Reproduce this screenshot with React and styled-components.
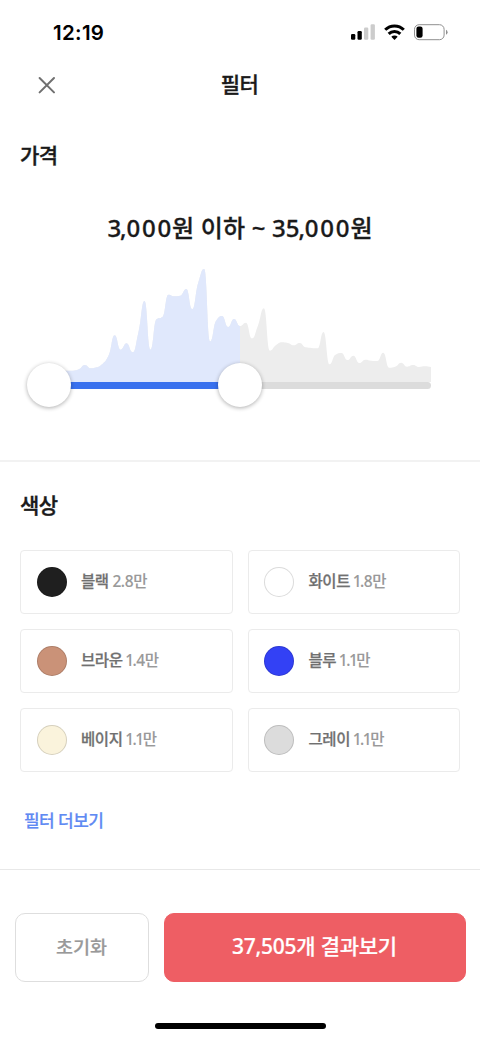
import React from "react";
import styled, { createGlobalStyle } from "styled-components";

const GlobalStyle = createGlobalStyle`
  * {
    box-sizing: border-box;
  }

  body {
    margin: 0;
    background: #ffffff;
    font-family: "Noto Sans", "Noto Sans CJK KR", sans-serif;
    color: #1a1a1a;
  }

  button {
    font-family: inherit;
    cursor: pointer;
  }
`;

const Container = styled.div`
  width: 480px;
  height: 1039px;
  display: flex;
  flex-direction: column;
  overflow: hidden;
`;

const StatusBar = styled.div`
  height: 62px;
  padding: 2px 32px 0 53px;
  display: flex;
  align-items: center;
  justify-content: space-between;
`;

const Time = styled.span`
  font-family: "Inter", sans-serif;
  font-size: 20.5px;
  font-weight: 600;
  letter-spacing: 0.3px;
  color: #000000;
`;

const StatusIcons = styled.svg`
  width: 98px;
  height: 18px;
`;

const Header = styled.header`
  height: 46px;
  padding: 0 38px;
  display: grid;
  grid-template-columns: 18px 1fr 18px;
  align-items: center;
`;

const CloseButton = styled.button`
  display: flex;
  padding: 0;
  border: none;
  background: none;
`;

const Title = styled.h1`
  margin: 0;
  padding: 0 1px 3px 0;
  font-size: 21px;
  line-height: 30px;
  font-weight: 500;
  letter-spacing: -0.5px;
  text-align: center;
  -webkit-text-stroke: 0.35px currentColor;
`;

const Section = styled.section`
  padding: ${({ $top }) => $top}px 20px 0;
  height: ${({ $height }) => $height}px;
  border-bottom: ${({ $line }) => $line};
`;

const SectionTitle = styled.h2`
  margin: 0;
  font-size: 21px;
  line-height: 30px;
  font-weight: 500;
  letter-spacing: -0.5px;
  -webkit-text-stroke: 0.4px currentColor;
`;

const PriceRange = styled.p`
  margin: 41px 0 0;
  font-size: 24px;
  line-height: 34px;
  font-weight: 500;
  text-align: center;
  white-space: nowrap;
  word-spacing: 0.4px;
  -webkit-text-stroke: 0.3px currentColor;
`;

const Glyph = styled.span`
  margin: 0 ${({ $space }) => $space}px;
`;

const Slider = styled.div`
  position: relative;
  width: 382px;
  margin: 17px 0 0 29px;
`;

const Histogram = styled.svg`
  display: block;
  width: 382px;
  height: 120px;
`;

const Track = styled.div`
  height: 7px;
  border-radius: 4px;
  background: #dcdcdc;
`;

const TrackFill = styled.div`
  height: 7px;
  border-radius: 4px;
  background: #3971ee;
`;

const Knob = styled.div`
  position: absolute;
  bottom: -18px;
  width: 44px;
  height: 44px;
  margin-left: -22px;
  border-radius: 50%;
  background: #ffffff;
  box-shadow: 0 1px 4px rgba(0, 0, 0, 0.32);
`;

const ColorGrid = styled.div`
  margin-top: 30px;
  display: grid;
  grid-template-columns: 1fr 1fr;
  gap: 15px;
`;

const ColorCard = styled.button`
  height: 64px;
  padding: 0 15.5px;
  display: flex;
  align-items: center;
  gap: 14.5px;
  border: 1px solid #ebebeb;
  border-radius: 4px;
  background: #ffffff;
`;

const Swatch = styled.span`
  width: 30px;
  height: 30px;
  border-radius: 50%;
  border: 1px solid rgba(0, 0, 0, 0.14);
  background: ${({ $color }) => $color};
`;

const ColorLabel = styled.span`
  font-size: 15.5px;
  line-height: 22px;
  font-weight: 500;
  letter-spacing: -0.4px;
  color: #707070;
  padding-bottom: 2px;
  -webkit-text-stroke: 0.25px currentColor;
`;

const Count = styled.span`
  font-weight: 500;
  color: #999999;
  -webkit-text-stroke: 0.1px currentColor;
`;

const MoreLink = styled.button`
  margin: 37px 0 0 4px;
  padding: 0;
  border: none;
  background: none;
  font-size: 17px;
  line-height: 24px;
  font-weight: 500;
  letter-spacing: -0.55px;
  color: #5f8af3;
  -webkit-text-stroke: 0.2px currentColor;
`;

const Footer = styled.footer`
  flex: 1;
  padding: 43px 14.5px 10px;
  display: flex;
  flex-direction: column;
  justify-content: space-between;
  align-items: center;
`;

const Actions = styled.div`
  width: 100%;
  display: grid;
  grid-template-columns: 134px 1fr;
  gap: 15px;
`;

const ActionButton = styled.button`
  height: 69px;
  padding: 0 0 ${({ $primary }) => ($primary ? 5 : 3)}px;
  border: 1px solid ${({ $primary }) => ($primary ? "#ee5e64" : "#dedede")};
  border-radius: 10px;
  background: ${({ $primary }) => ($primary ? "#ee5e64" : "#ffffff")};
  color: ${({ $primary }) => ($primary ? "#ffffff" : "#999999")};
  font-size: ${({ $primary }) => ($primary ? 21 : 18.5)}px;
  font-weight: 500;
  letter-spacing: ${({ $primary }) => ($primary ? -0.25 : 0)}px;
  -webkit-text-stroke: 0.2px currentColor;
`;

const HomeIndicator = styled.div`
  width: 171px;
  height: 6px;
  border-radius: 3px;
  background: #000000;
`;

const colors = [
  { name: "블랙", count: "2.8만", value: "#1f1f1f" },
  { name: "화이트", count: "1.8만", value: "#ffffff" },
  { name: "브라운", count: "1.4만", value: "#ca9278" },
  { name: "블루", count: "1.1만", value: "#3341f5" },
  { name: "베이지", count: "1.1만", value: "#faf3dc" },
  { name: "그레이", count: "1.1만", value: "#dcdcdc" },
];

const prices = [
  34, 34, 34, 34, 34, 38, 51, 41, 44, 55, 80, 140, 97, 116, 89, 151, 243, 97,
  188, 195, 262, 257, 259, 279, 219, 298, 339, 122, 184, 198, 165, 189, 168,
  178, 131, 169, 221, 94, 110, 119, 117, 110, 117, 104, 102, 101, 150, 53, 82,
  87, 66, 79, 57, 67, 64, 63, 88, 43, 46, 58, 46, 51, 45, 47, 45,
];

const WIDTH = 382;
const HEIGHT = 120;

// Smooth area through every bucket, flat at each peak and valley
const getAreaPath = (values) => {
  const step = WIDTH / (values.length - 1);
  const ys = values.map((value) => HEIGHT - value / 3);
  const slopes = ys.map((y, i) => {
    if (i === 0 || i === ys.length - 1) return 0;
    const before = y - ys[i - 1];
    const after = ys[i + 1] - y;
    return before * after <= 0 ? 0 : (2 * before * after) / (before + after);
  });

  let path = `M0 ${HEIGHT} L0 ${ys[0]}`;
  for (let i = 1; i < ys.length; i++) {
    const x = i * step;
    path += ` C${x - step / 2} ${ys[i - 1] + slopes[i - 1] / 2}`;
    path += ` ${x - step / 2} ${ys[i] - slopes[i] / 2} ${x} ${ys[i]}`;
  }
  return `${path} L${WIDTH} ${HEIGHT} Z`;
};

// Adjusts the room around single characters, e.g. the wide tabular "1"
const SpacedText = ({ text, spacing }) =>
  text.split("").map((char, i) =>
    char in spacing ? (
      <Glyph key={i} $space={spacing[char]}>
        {char}
      </Glyph>
    ) : (
      char
    )
  );

const PriceSlider = ({ from, to }) => {
  const area = getAreaPath(prices);

  return (
    <Slider>
      <Histogram viewBox={`0 0 ${WIDTH} ${HEIGHT}`}>
        <clipPath id="selected">
          <rect x={from * WIDTH} width={(to - from) * WIDTH} height={HEIGHT} />
        </clipPath>
        <path d={area} fill="#ededed" />
        <path d={area} fill="#e0e8fc" clipPath="url(#selected)" />
      </Histogram>
      <Track>
        <TrackFill
          style={{
            marginLeft: `${from * 100}%`,
            width: `${(to - from) * 100}%`,
          }}
        />
      </Track>
      <Knob style={{ left: `${from * 100}%` }} />
      <Knob style={{ left: `${to * 100}%` }} />
    </Slider>
  );
};

const App = () => {
  return (
    <Container>
      <GlobalStyle />
      <StatusBar>
        <Time>12:19</Time>
        <StatusIcons viewBox="0 0 98 18">
          <rect x="1" y="11" width="4.3" height="5.8" rx="1.2" />
          <rect x="7.5" y="8" width="4.3" height="8.8" rx="1.2" />
          <rect x="14" y="4.6" width="4.3" height="12.2" rx="1.2" fill="#ccc" />
          <rect x="20.6" y="1.2" width="4.3" height="15.6" rx="1.2" fill="#ccc" />
          <g fill="none" stroke="#000" strokeWidth="3">
            <path d="M35.2 6.8a13.2 13.2 0 0 1 18.6 0" />
            <path d="M38.7 10.9a8.2 8.2 0 0 1 11.6 0" />
          </g>
          <path d="M44.5 17l-3.2-3.3a4.6 4.6 0 0 1 6.4 0z" />
          <rect
            x="64.5"
            y="1.7"
            width="29.6"
            height="15"
            rx="4.6"
            fill="none"
            stroke="#8f8f8f"
          />
          <rect x="66.4" y="3.6" width="6.2" height="11.2" rx="2.2" />
          <path d="M96 6.7v5q1.6-.9 1.6-2.5t-1.6-2.5z" fill="#8f8f8f" />
        </StatusIcons>
      </StatusBar>

      <Header>
        <CloseButton aria-label="닫기">
          <svg width="18" height="18" viewBox="0 0 18 18">
            <path
              d="M1.6 2l14.4 14.4M16 2L1.6 16.4"
              stroke="#707070"
              strokeWidth="2"
              strokeLinecap="round"
            />
          </svg>
        </CloseButton>
        <Title>필터</Title>
      </Header>

      <Section $top={32} $height={354} $line="2px solid #f2f2f2">
        <SectionTitle>가격</SectionTitle>
        <PriceRange>
          <SpacedText
            text="3,000원 이하 ~ 35,000원"
            spacing={{ 0: 0.9, ",": -1.1 }}
          />
        </PriceRange>
        <PriceSlider from={0} to={0.5} />
      </Section>

      <Section $top={28} $height={408} $line="1px solid #e8e8e8">
        <SectionTitle>색상</SectionTitle>
        <ColorGrid>
          {colors.map(({ name, count, value }) => (
            <ColorCard key={name}>
              <Swatch $color={value} />
              <ColorLabel>
                {name}{" "}
                <Count>
                  <SpacedText text={count} spacing={{ 1: -1.1 }} />
                </Count>
              </ColorLabel>
            </ColorCard>
          ))}
        </ColorGrid>
        <MoreLink>필터 더보기</MoreLink>
      </Section>

      <Footer>
        <Actions>
          <ActionButton>초기화</ActionButton>
          <ActionButton $primary>37,505개 결과보기</ActionButton>
        </Actions>
        <HomeIndicator />
      </Footer>
    </Container>
  );
};

export default App;
